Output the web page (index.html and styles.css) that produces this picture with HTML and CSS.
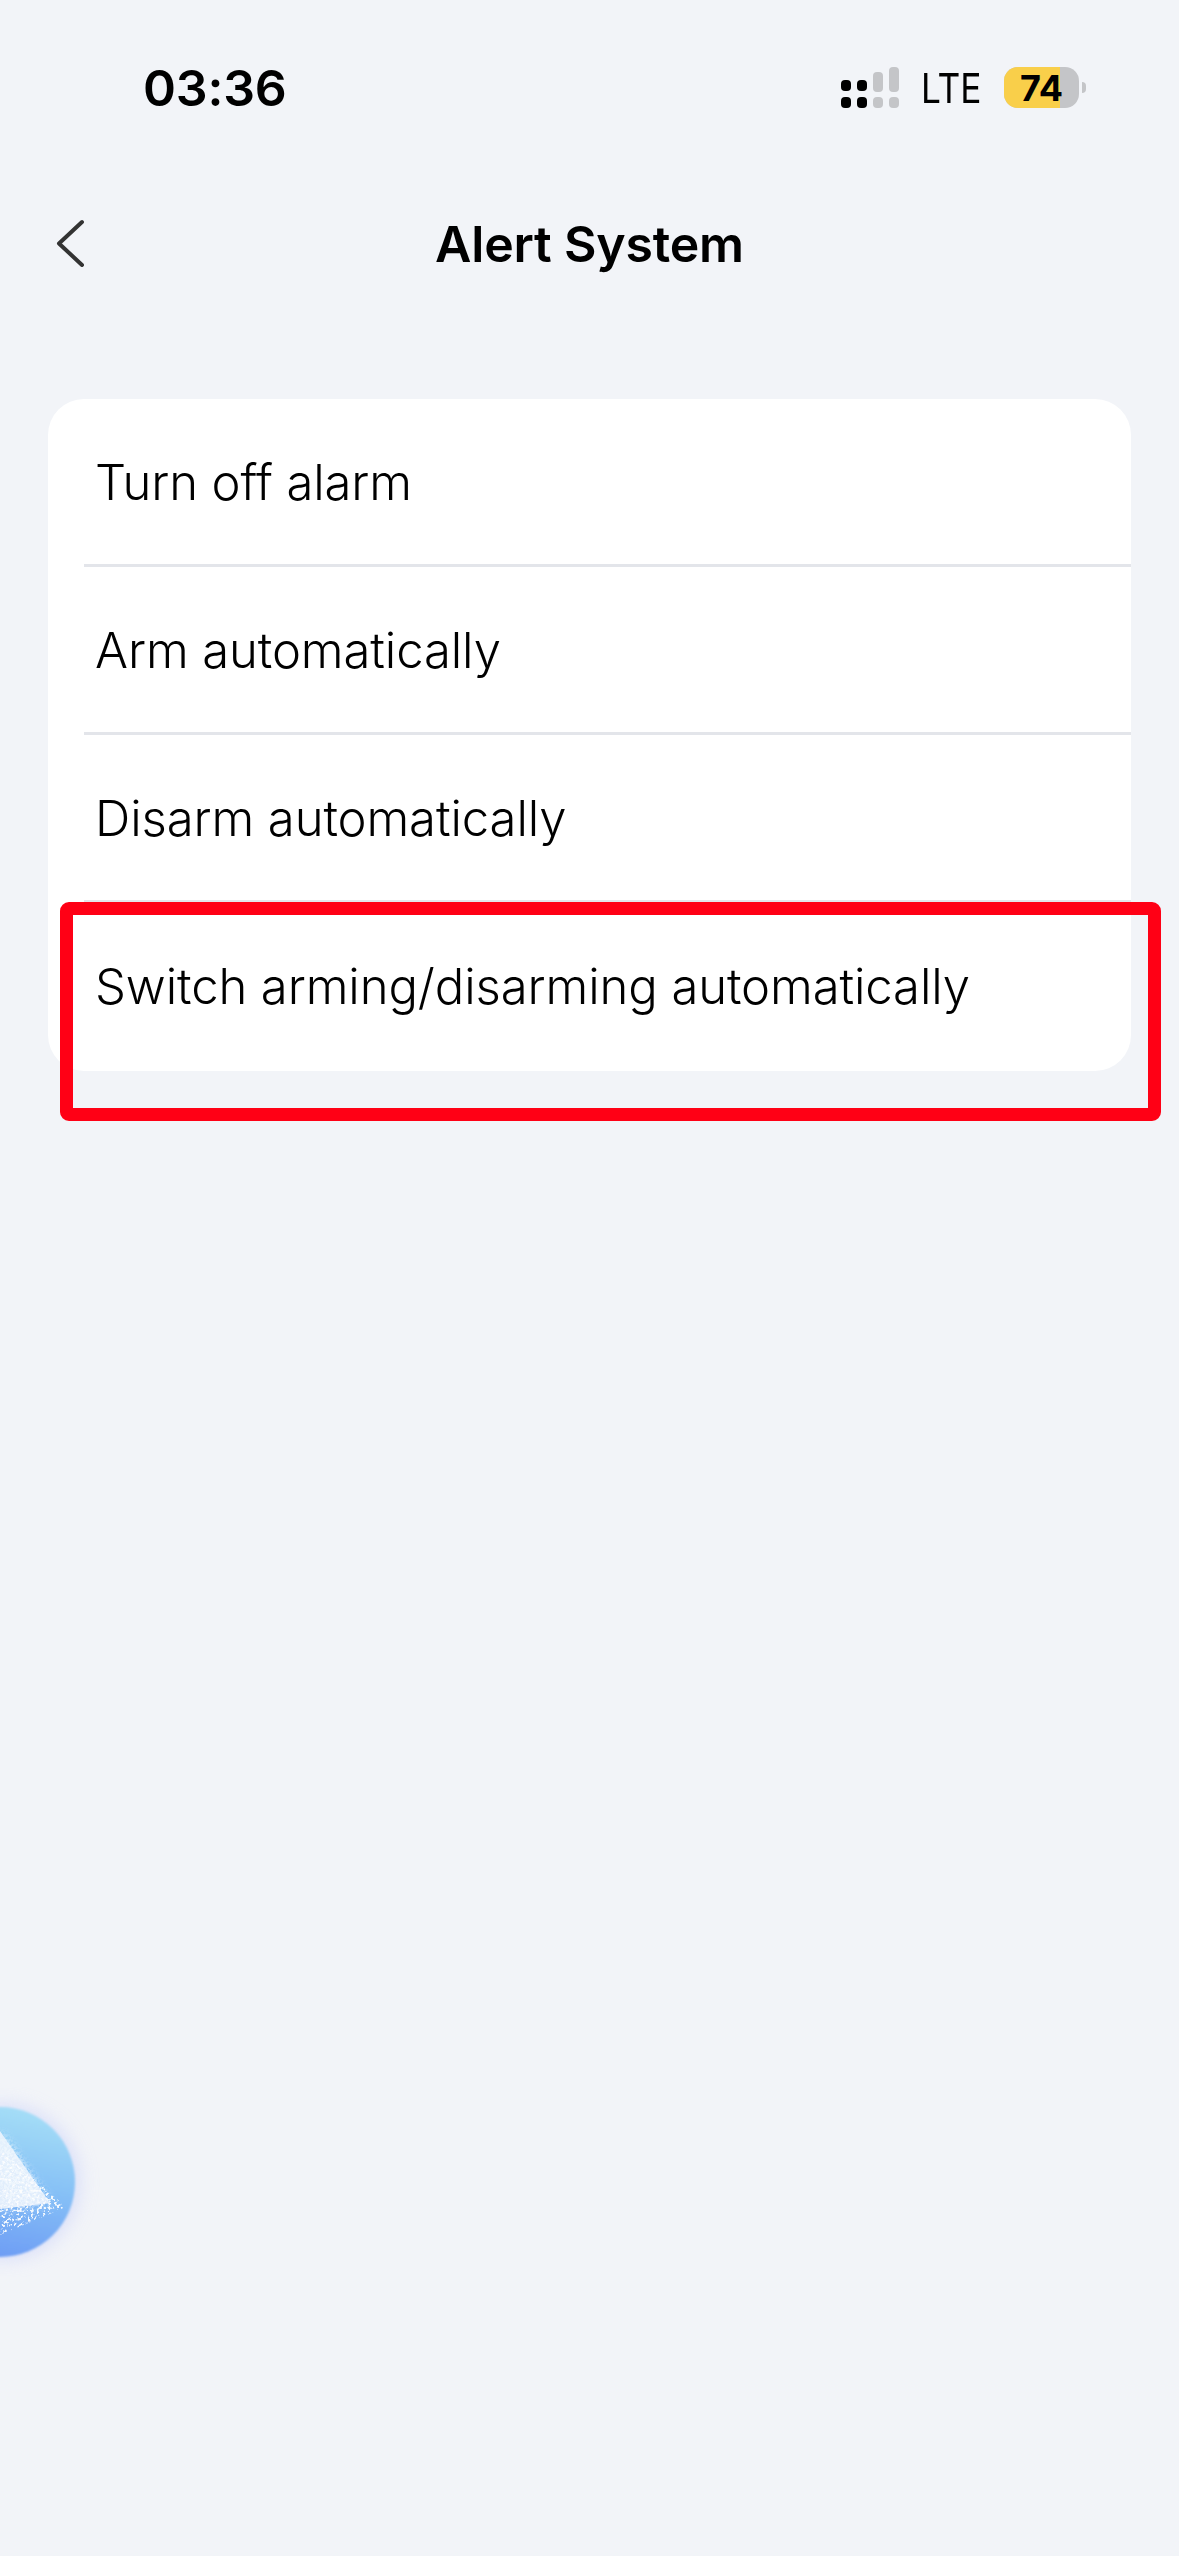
FILE: index.html
```html
<!DOCTYPE html>
<html lang="en">
  <head>
    <title>Alert System</title>
    <meta charset="utf-8" />
    <link rel="stylesheet" href="styles.css">
  </head>
  <body>
    <div class="statusbar">
      <span class="time">03:36</span>
      <div class="status-right">
        <svg class="signal" width="58" height="41" viewBox="0 0 58 41">
          <rect x="0" y="13" width="10" height="11" rx="4" fill="#000" />
          <rect x="0" y="30" width="10" height="11" rx="4" fill="#000" />
          <rect x="16" y="13" width="10" height="11" rx="4" fill="#000" />
          <rect x="16" y="30" width="10" height="11" rx="4" fill="#000" />
          <rect x="32" y="5" width="10" height="20" rx="4" fill="#c4c5c8" />
          <rect x="32" y="30" width="10" height="11" rx="4" fill="#c4c5c8" />
          <rect x="48" y="0" width="10" height="25" rx="4" fill="#c4c5c8" />
          <rect x="48" y="30" width="10" height="11" rx="4" fill="#c4c5c8" />
        </svg>
        <span class="network">LTE</span>
        <div class="battery">
          <div class="battery-body">
            <div class="battery-level" style="width: 74%"></div>
            <span class="battery-text">74</span>
          </div>
          <div class="battery-nub"></div>
        </div>
      </div>
    </div>

    <div class="navbar">
      <svg class="back" width="30" height="48" viewBox="0 0 30 48">
        <path d="M27 3 L4 24.500 L27 46" fill="none" stroke="#333" stroke-width="4" stroke-linecap="round" stroke-linejoin="round" />
      </svg>
      <h1 class="title">Alert System</h1>
    </div>

    <div class="card">
      <div class="row"><span>Turn off alarm</span></div>
      <div class="row"><span>Arm automatically</span></div>
      <div class="row"><span>Disarm automatically</span></div>
      <div class="row"><span>Switch arming/disarming automatically</span></div>
    </div>

    <div class="highlight"></div>

    <svg class="orb" width="110" height="190" viewBox="0 0 110 190">
      <defs>
        <linearGradient id="orbFill" x1="0.6" y1="0" x2="0.4" y2="1">
          <stop offset="0" stop-color="#a5def7" />
          <stop offset="0.5" stop-color="#86c0f6" />
          <stop offset="1" stop-color="#6d9cf4" />
        </linearGradient>
        <filter id="orbGlow" x="-40%" y="-40%" width="180%" height="180%">
          <feGaussianBlur stdDeviation="9" />
        </filter>
        <filter id="orbEdge" x="-10%" y="-10%" width="120%" height="120%">
          <feGaussianBlur stdDeviation="1.200" />
        </filter>
        <filter id="speckle" x="-40%" y="-40%" width="180%" height="180%" color-interpolation-filters="sRGB">
          <feGaussianBlur in="SourceGraphic" stdDeviation="5" result="spread" />
          <feTurbulence type="fractalNoise" baseFrequency="0.4" numOctaves="2" seed="7" result="noise" />
          <feColorMatrix in="noise" type="matrix" values="0 0 0 0 1  0 0 0 0 1  0 0 0 0 1  7 0 0 0 -2.900" result="grain" />
          <feComposite in="grain" in2="spread" operator="in" result="dots" />
          <feGaussianBlur in="dots" stdDeviation="0.400" result="softDots" />
          <feMerge>
            <feMergeNode in="SourceGraphic" />
            <feMergeNode in="softDots" />
          </feMerge>
        </filter>
        <filter id="scatter" x="-20%" y="-20%" width="140%" height="140%" color-interpolation-filters="sRGB">
          <feTurbulence type="fractalNoise" baseFrequency="0.35" numOctaves="2" seed="12" result="noise" />
          <feColorMatrix in="noise" type="matrix" values="0 0 0 0 1  0 0 0 0 1  0 0 0 0 1  9 0 0 0 -4.800" result="grain" />
          <feComposite in="grain" in2="SourceGraphic" operator="in" />
        </filter>
      </defs>
      <circle cx="2" cy="95" r="78" fill="#c5cdfa" opacity="0.55" filter="url(#orbGlow)" />
      <circle cx="0" cy="95" r="75" fill="url(#orbFill)" filter="url(#orbEdge)" />
      <polygon points="0,62 66,120 0,148" fill="#fff" opacity="0.9" filter="url(#scatter)" />
      <polygon points="0,44 50,116 0,122" fill="#f1f6fe" opacity="0.86" filter="url(#speckle)" />
    </svg>
  </body>
</html>
```

FILE: styles.css
```css
html,
body {
  margin: 0;
  padding: 0;
}

body {
  position: relative;
  width: 1179px;
  height: 2556px;
  overflow: hidden;
  background-color: #f2f4f8;
  color: #000;
  font-family: "Inter", "Liberation Sans", sans-serif;
}

.statusbar {
  display: flex;
  align-items: center;
  justify-content: space-between;
  height: 41px;
  padding: 67px 93px 0 143px;
}

.time {
  font-size: 50px;
  font-weight: 600;
  letter-spacing: -0.2px;
}

.status-right {
  display: flex;
  align-items: center;
}

.network {
  width: 59px;
  margin-left: 22px;
  font-size: 41px;
  transform: scaleX(0.86);
  transform-origin: left center;
}

.battery {
  display: flex;
  align-items: center;
  margin-left: 24px;
}

.battery-body {
  position: relative;
  display: flex;
  align-items: center;
  justify-content: center;
  width: 75px;
  height: 41px;
  border-radius: 14px;
  overflow: hidden;
  background-color: #c4c5c8;
}

.battery-level {
  position: absolute;
  top: 0;
  bottom: 0;
  left: 0;
  background-color: #f9cf4a;
}

.battery-text {
  position: relative;
  font-size: 36px;
  font-weight: 700;
}

.battery-nub {
  width: 4px;
  height: 11px;
  margin-left: 3px;
  border-radius: 0 6px 6px 0;
  background-color: #c4c5c8;
}

.navbar {
  position: relative;
  display: flex;
  align-items: center;
  justify-content: center;
  height: 80px;
  margin-top: 96px;
}

.back {
  position: absolute;
  left: 55px;
  top: 15px;
}

.title {
  margin: 0;
  font-size: 50px;
  font-weight: 600;
  letter-spacing: -0.2px;
}

.card {
  display: flex;
  flex-direction: column;
  margin: 115px 48px 0;
  border-radius: 36px;
  overflow: hidden;
  background-color: #fff;
}

.row {
  position: relative;
  display: flex;
  align-items: center;
  box-sizing: border-box;
  height: 168px;
  padding: 0 0 2px 47px;
  font-size: 49px;
  font-weight: 350;
  letter-spacing: -0.1px;
}

.row + .row::before {
  content: "";
  position: absolute;
  top: -3px;
  left: 36px;
  right: 0;
  height: 3px;
  background-color: #e3e5ea;
}

.highlight {
  position: absolute;
  top: 902px;
  left: 60px;
  width: 1075px;
  height: 193px;
  border: 13px solid #ff0015;
  border-radius: 9px;
}

.orb {
  position: absolute;
  top: 2087px;
  left: 0;
}
```
